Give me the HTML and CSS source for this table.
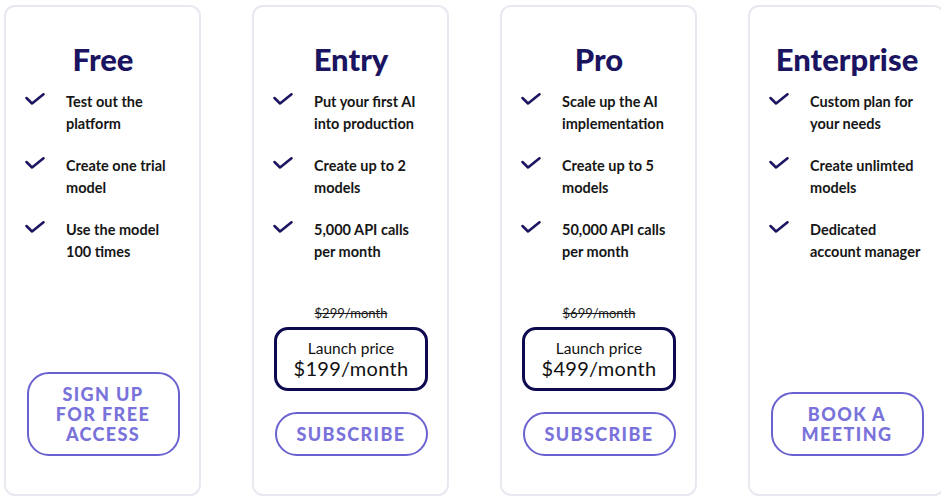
FILE: index.html
```html
<!DOCTYPE html>
<html>
<head>
<meta charset="utf-8">
<link rel="stylesheet" href="styles.css">
</head>
<body>
<div class="plans">
  <div class="card">
    <h2 class="title">Free</h2>
    <ul class="features">
      <li><svg class="check" viewBox="0 0 20 12"><polyline points="1.5,5 7,10.5 18.5,1.2"/></svg><span>Test out the platform</span></li>
      <li><svg class="check" viewBox="0 0 20 12"><polyline points="1.5,5 7,10.5 18.5,1.2"/></svg><span>Create one trial model</span></li>
      <li><svg class="check" viewBox="0 0 20 12"><polyline points="1.5,5 7,10.5 18.5,1.2"/></svg><span>Use the model 100 times</span></li>
    </ul>
    <div class="bottom">
      <a class="btn">SIGN UP<br>FOR FREE<br>ACCESS</a>
    </div>
  </div>
  <div class="card">
    <h2 class="title">Entry</h2>
    <ul class="features">
      <li><svg class="check" viewBox="0 0 20 12"><polyline points="1.5,5 7,10.5 18.5,1.2"/></svg><span>Put your first AI into production</span></li>
      <li><svg class="check" viewBox="0 0 20 12"><polyline points="1.5,5 7,10.5 18.5,1.2"/></svg><span>Create up to 2 models</span></li>
      <li><svg class="check" viewBox="0 0 20 12"><polyline points="1.5,5 7,10.5 18.5,1.2"/></svg><span>5,000 API calls per month</span></li>
    </ul>
    <div class="bottom">
      <div class="old-price">$299/month</div>
      <div class="launch">
        <div class="launch-label">Launch price</div>
        <div class="launch-price">$199/month</div>
      </div>
      <a class="btn">SUBSCRIBE</a>
    </div>
  </div>
  <div class="card">
    <h2 class="title">Pro</h2>
    <ul class="features">
      <li><svg class="check" viewBox="0 0 20 12"><polyline points="1.5,5 7,10.5 18.5,1.2"/></svg><span>Scale up the AI implementation</span></li>
      <li><svg class="check" viewBox="0 0 20 12"><polyline points="1.5,5 7,10.5 18.5,1.2"/></svg><span>Create up to 5 models</span></li>
      <li><svg class="check" viewBox="0 0 20 12"><polyline points="1.5,5 7,10.5 18.5,1.2"/></svg><span>50,000 API calls per month</span></li>
    </ul>
    <div class="bottom">
      <div class="old-price">$699/month</div>
      <div class="launch">
        <div class="launch-label">Launch price</div>
        <div class="launch-price">$499/month</div>
      </div>
      <a class="btn">SUBSCRIBE</a>
    </div>
  </div>
  <div class="card">
    <h2 class="title">Enterprise</h2>
    <ul class="features">
      <li><svg class="check" viewBox="0 0 20 12"><polyline points="1.5,5 7,10.5 18.5,1.2"/></svg><span>Custom plan for your needs</span></li>
      <li><svg class="check" viewBox="0 0 20 12"><polyline points="1.5,5 7,10.5 18.5,1.2"/></svg><span>Create unlimted models</span></li>
      <li><svg class="check" viewBox="0 0 20 12"><polyline points="1.5,5 7,10.5 18.5,1.2"/></svg><span>Dedicated account manager</span></li>
    </ul>
    <div class="bottom">
      <a class="btn">BOOK A<br>MEETING</a>
    </div>
  </div>
</div>
</body>
</html>
```
FILE: styles.css
```css
* { box-sizing: border-box; }
html, body { margin: 0; padding: 0; background: #ffffff; overflow: hidden; }
body { font-family: "Lato", "Open Sans", sans-serif; color: #141414; }

.plans {
  display: flex;
  gap: 51px;
  padding: 5px 0 0 4px;
}

.card {
  flex: 0 0 197px;
  height: 491px;
  border: 2px solid #e8e8f0;
  border-radius: 11px;
  display: flex;
  flex-direction: column;
  padding: 33px 10px 38px 18px;
}

.title {
  margin: 0 0 13px;
  text-align: center;
  font-size: 31px;
  line-height: 38px;
  font-weight: 900;
  color: #1b1561;
  padding-right: 7px;
}

.features {
  list-style: none;
  margin: 0;
  padding: 0;
}
.features li {
  display: flex;
  align-items: flex-start;
  margin-bottom: 20px;
}
.check {
  flex: 0 0 20px;
  width: 20px;
  height: 12px;
  margin: 2px 21px 0 1px;
}
.check polyline {
  fill: none;
  stroke: #1b1561;
  stroke-width: 2.5;
  stroke-linecap: round;
  stroke-linejoin: round;
}
.features span {
  font-size: 14.5px;
  line-height: 22px;
  font-weight: 700;
  color: #161616;
  max-width: 112px;
}

.bottom {
  margin-top: auto;
  display: flex;
  flex-direction: column;
  align-items: center;
  padding-right: 7px;
}

.old-price {
  font-size: 13px;
  line-height: 16px;
  text-decoration: line-through;
  color: #1a1a1a;
  margin-bottom: 6px;
}

.launch {
  width: 154px;
  height: 64px;
  border: 3px solid #0e0a4f;
  border-radius: 14px;
  display: flex;
  flex-direction: column;
  align-items: center;
  justify-content: center;
  margin-bottom: 21px;
}
.launch-label {
  font-size: 15.5px;
  line-height: 18px;
  color: #111;
}
.launch-price {
  font-size: 20px;
  line-height: 22px;
  color: #111;
  letter-spacing: 0.3px;
}

.btn {
  width: 153px;
  border: 2px solid #6a62d1;
  border-radius: 22px;
  text-align: center;
  color: #7a72db;
  font-weight: 900;
  font-size: 18px;
  line-height: 20px;
  letter-spacing: 1.4px;
  padding: 10px 0 10px;
  text-decoration: none;
}
```
